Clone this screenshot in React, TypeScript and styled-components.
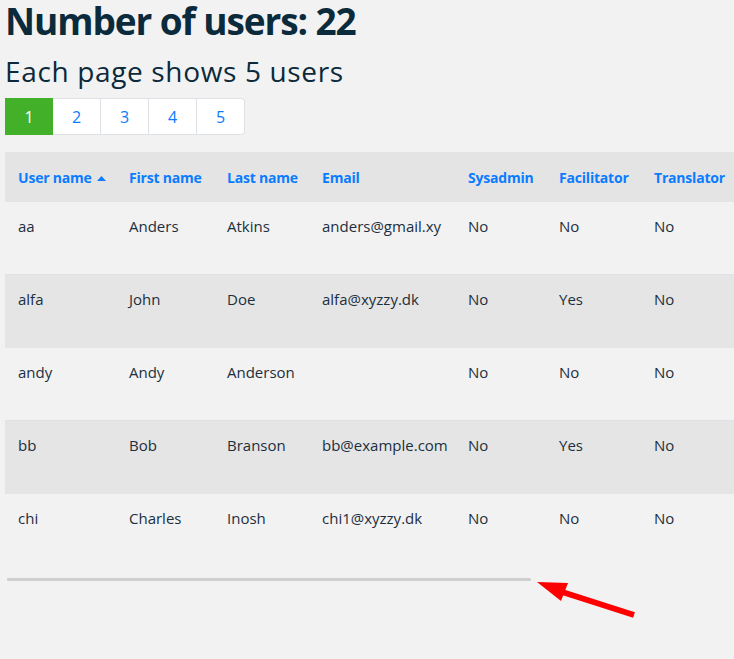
import React from "react";
import styled, { createGlobalStyle } from "styled-components";

const GlobalStyle = createGlobalStyle`
  html, body {
    margin: 0;
    padding: 0;
    background: #f2f2f2;
    overflow: hidden;
  }
  body {
    font-family: "Open Sans", "Noto Sans", sans-serif;
    color: #1c2f3e;
  }
`;

const Page = styled.div`
  position: relative;
  display: flow-root;
  padding-left: 5px;
  width: 729px;
  height: 659px;
`;

const Title = styled.h1`
  margin: 0;
  font-size: 37px;
  line-height: 41px;
  font-weight: 700;
  color: #0b2a3b;
  letter-spacing: -1.1px;
  white-space: nowrap;
`;

const Subtitle = styled.h3`
  margin: 14px 0 0 0;
  font-size: 28px;
  line-height: 32px;
  font-weight: 400;
  color: #0b2a3b;
  letter-spacing: 0.65px;
  white-space: nowrap;
`;

const Pager = styled.ul`
  display: flex;
  list-style: none;
  margin: 11px 0 0 0;
  padding: 0;
`;

const PageItem = styled.li<{ $active?: boolean; $last?: boolean }>`
  width: 48px;
  height: 37px;
  box-sizing: border-box;
  display: flex;
  align-items: center;
  justify-content: center;
  font-size: 16px;
  background: ${(p) => (p.$active ? "#43b02a" : "#ffffff")};
  color: ${(p) => (p.$active ? "#ffffff" : "#0a7cff")};
  border: 1px solid ${(p) => (p.$active ? "#43b02a" : "#dee2e6")};
  border-left-width: ${(p) => (p.$active ? "1px" : "0")};
  border-radius: ${(p) => (p.$last ? "0 4px 4px 0" : "0")};
`;

const Scroller = styled.div`
  margin-top: 17px;
  overflow: hidden;
`;

const Table = styled.table`
  width: 1014px;
  table-layout: fixed;
  border-collapse: collapse;
`;

const HeadRow = styled.tr`
  background: #e4e4e4;
  height: 49px;
`;

const Th = styled.th<{ $w: number }>`
  box-sizing: border-box;
  width: ${(p) => p.$w}px;
  text-align: left;
  padding: 14px 12px 11px 13px;
  font-size: 14px;
  letter-spacing: -0.2px;
  line-height: 24px;
  font-weight: 700;
  color: #0a7cff;
  white-space: nowrap;
`;

const Row = styled.tr<{ $shade: boolean }>`
  background: ${(p) => (p.$shade ? "#e5e5e5" : "transparent")};
  border-top: 1px solid ${(p) => (p.$shade ? "#dfe1e4" : "transparent")};
  height: 73px;
`;

const Td = styled.td`
  box-sizing: border-box;
  vertical-align: top;
  padding: 12px 12px 12px 13px;
  font-size: 15px;
  line-height: 24px;
  white-space: nowrap;
`;

const Caret = styled.svg`
  margin-left: 5px;
  vertical-align: 2px;
`;

const ScrollTrack = styled.div`
  margin-top: 11px;
  height: 3px;
  padding-left: 2px;
`;

const ScrollThumb = styled.div`
  height: 3px;
  background: #cfcfcf;
  border-radius: 1px;
`;

const Arrow = styled.svg`
  position: absolute;
  left: 0;
  top: 0;
  pointer-events: none;
`;

const columns = [
  { label: "User name", w: 111, sorted: true },
  { label: "First name", w: 98 },
  { label: "Last name", w: 95 },
  { label: "Email", w: 146 },
  { label: "Sysadmin", w: 91 },
  { label: "Facilitator", w: 95 },
  { label: "Translator", w: 378 },
];

const users = [
  ["aa", "Anders", "Atkins", "anders@gmail.xy", "No", "No", "No"],
  ["alfa", "John", "Doe", "alfa@xyzzy.dk", "No", "Yes", "No"],
  ["andy", "Andy", "Anderson", "", "No", "No", "No"],
  ["bb", "Bob", "Branson", "bb@example.com", "No", "Yes", "No"],
  ["chi", "Charles", "Inosh", "chi1@xyzzy.dk", "No", "No", "No"],
];

const visibleWidth = 729;
const contentWidth = 1014;

export default function App() {
  const thumb = Math.round((visibleWidth * visibleWidth) / contentWidth);
  return (
    <>
      <GlobalStyle />
      <Page>
        <Title>Number of users: 22</Title>
        <Subtitle>Each page shows 5 users</Subtitle>
        <Pager>
          {[1, 2, 3, 4, 5].map((n) => (
            <PageItem key={n} $active={n === 1} $last={n === 5}>
              {n}
            </PageItem>
          ))}
        </Pager>
        <Scroller>
          <Table>
            <thead>
              <HeadRow>
                {columns.map((c) => (
                  <Th key={c.label} $w={c.w}>
                    {c.label}
                    {c.sorted && (
                      <Caret width="9" height="5" viewBox="0 0 9 5">
                        <polygon points="0,5 4.5,0 9,5" fill="#0a7cff" />
                      </Caret>
                    )}
                  </Th>
                ))}
              </HeadRow>
            </thead>
            <tbody>
              {users.map((u, i) => (
                <Row key={u[0]} $shade={i % 2 === 1}>
                  {u.map((v, j) => (
                    <Td key={j}>{v}</Td>
                  ))}
                </Row>
              ))}
            </tbody>
          </Table>
        </Scroller>
        <ScrollTrack>
          <ScrollThumb style={{ width: thumb }} />
        </ScrollTrack>
        <Arrow width="734" height="659" viewBox="0 0 734 659">
          <line x1="556" y1="590" x2="634" y2="615" stroke="#ff0000" strokeWidth="6" />
          <polygon points="537,582 568,583 561,601" fill="#ff0000" />
        </Arrow>
      </Page>
    </>
  );
}
